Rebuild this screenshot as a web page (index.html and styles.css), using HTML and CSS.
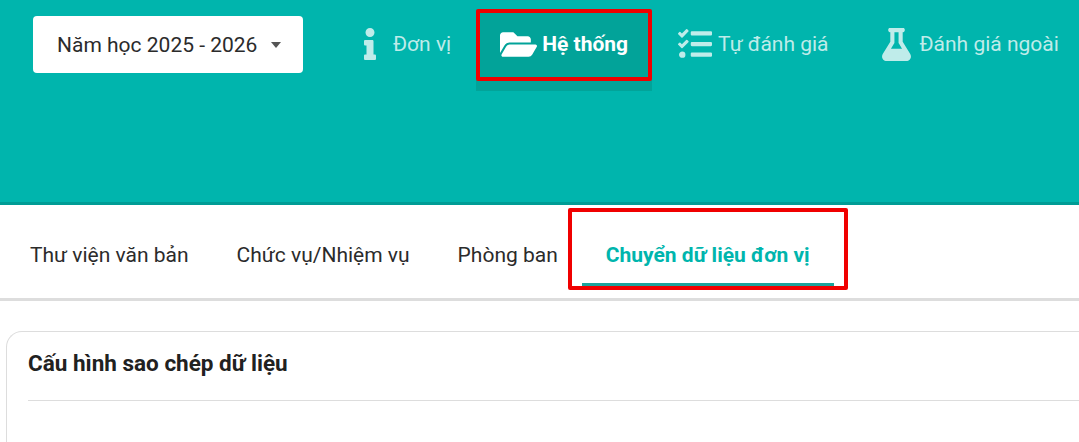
FILE: index.html
```html
<!DOCTYPE html>
<html lang="en">
<head>
  <meta charset="UTF-8">
  <meta name="viewport" content="width=device-width, initial-scale=1.0">
  <title>Chuyển dữ liệu đơn vị</title>
  <link rel="stylesheet" href="styles.css">
</head>
<body>
  <header class="topbar">
    <div class="year-select">
      <span>Năm học 2025 - 2026</span>
      <i class="caret"></i>
    </div>
    <nav class="main-nav">
      <a class="nav-item">
        <svg class="icon" width="12" height="32" viewBox="0 0 192 512"><path d="M20 424.229h20V279.771H20c-11.046 0-20-8.954-20-20V212c0-11.046 8.954-20 20-20h112c11.046 0 20 8.954 20 20v212.229h20c11.046 0 20 8.954 20 20V492c0 11.046-8.954 20-20 20H20c-11.046 0-20-8.954-20-20v-47.771c0-11.046 8.954-20 20-20zM96 0C56.235 0 24 32.235 24 72s32.235 72 72 72 72-32.235 72-72S135.764 0 96 0z"/></svg>
        <span class="nav-label info-label">Đơn vị</span>
      </a>
      <a class="nav-item active">
        <svg class="icon" width="37" height="33" viewBox="0 0 576 512"><path d="M572.694 292.093L500.27 416.248A63.997 63.997 0 0 1 444.989 448H45.025c-18.523 0-30.064-20.093-20.731-36.093l72.424-124.155A64 64 0 0 1 152 256h399.964c18.523 0 30.064 20.093 20.73 36.093zM152 224h328v-48c0-26.51-21.49-48-48-48H272l-64-64H48C21.49 64 0 85.49 0 112v278.046l69.077-118.418C86.214 242.25 117.989 224 152 224z"/></svg>
        <span class="nav-label">Hệ thống</span>
        <span class="mark mark-nav"></span>
      </a>
      <a class="nav-item tasks-item">
        <svg class="icon" width="34" height="34" viewBox="0 0 512 512"><path d="M139.61 35.5a12 12 0 0 0-17 0L58.93 98.81l-22.7-22.12a12 12 0 0 0-17 0L3.53 92.41a12 12 0 0 0 0 17l47.59 47.4a12.78 12.78 0 0 0 17.61 0l15.59-15.62L156.52 69a12.09 12.09 0 0 0 .09-17zm0 159.19a12 12 0 0 0-17 0l-63.68 63.72-22.7-22.1a12 12 0 0 0-17 0L3.53 252a12 12 0 0 0 0 17L51 316.5a12.77 12.77 0 0 0 17.6 0l15.7-15.69 72.2-72.22a12 12 0 0 0 .09-16.9zM64 368c-26.49 0-48.59 21.5-48.59 48S37.53 464 64 464a48 48 0 0 0 0-96zm432 16H208a16 16 0 0 0-16 16v32a16 16 0 0 0 16 16h288a16 16 0 0 0 16-16v-32a16 16 0 0 0-16-16zm0-320H208a16 16 0 0 0-16 16v32a16 16 0 0 0 16 16h288a16 16 0 0 0 16-16V80a16 16 0 0 0-16-16zm0 160H208a16 16 0 0 0-16 16v32a16 16 0 0 0 16 16h288a16 16 0 0 0 16-16v-32a16 16 0 0 0-16-16z"/></svg>
        <span class="nav-label">Tự đánh giá</span>
      </a>
      <a class="nav-item flask-item">
        <svg class="icon" width="29" height="33" viewBox="0 0 448 512"><path d="M437.2 403.5L320 215V64h8c13.3 0 24-10.7 24-24V24c0-13.3-10.7-24-24-24H120c-13.3 0-24 10.7-24 24v16c0 13.3 10.7 24 24 24h8v151L10.8 403.5C-18.5 450.6 15.3 512 70.9 512h306.2c55.7 0 89.4-61.5 60.1-108.5zM137.9 320l48.2-77.6c3.7-5.2 5.8-11.6 5.8-18.4V64h64v160c0 6.9 2.2 13.2 5.8 18.4l48.2 77.6h-172z"/></svg>
        <span class="nav-label">Đánh giá ngoài</span>
      </a>
    </nav>
  </header>

  <div class="tabs">
    <a class="tab">Thư viện văn bản</a>
    <a class="tab">Chức vụ/Nhiệm vụ</a>
    <a class="tab">Phòng ban</a>
    <a class="tab active">Chuyển dữ liệu đơn vị<span class="mark mark-tab"></span></a>
  </div>

  <section class="card">
    <h2 class="card-title">Cấu hình sao chép dữ liệu</h2>
  </section>
</body>
</html>
```
FILE: styles.css
```css
body {
  margin: 0;
  overflow: hidden;
  background: #fff;
  font-family: Roboto, "Noto Sans", sans-serif;
  color: #212121;
}
.topbar {
  display: flex;
  align-items: flex-start;
  box-sizing: border-box;
  height: 205px;
  padding: 10px 0 0 33px;
  background: #00b5ad;
  border-bottom: 3px solid #009c95;
  overflow: hidden;
}
.year-select {
  display: flex;
  align-items: center;
  justify-content: space-between;
  box-sizing: border-box;
  flex: none;
  width: 270px;
  height: 57px;
  margin-top: 6px;
  padding: 0 22px 0 24px;
  background: #fff;
  border-radius: 4px;
  font-size: 21px;
  color: #2b2b2b;
}
.caret {
  width: 0;
  height: 0;
  border-left: 5.5px solid transparent;
  border-right: 5.5px solid transparent;
  border-top: 6px solid #555;
}
.main-nav {
  display: flex;
  margin-left: 37px;
  flex: none;
}
.nav-item {
  position: relative;
  display: flex;
  align-items: center;
  gap: 5px;
  height: 68px;
  padding: 0 24px 13px;
  margin-right: 1px;
  fill: rgba(255, 255, 255, 0.75);
  color: rgba(255, 255, 255, 0.75);
  font-size: 21px;
}
.nav-item.active {
  gap: 5px;
  background: #02a399;
  fill: #fff;
  color: #fff;
  font-weight: 700;
}
.info-label {
  margin-left: 12px;
}
.tasks-item {
  gap: 6px;
  margin-left: 1px;
}
.flask-item {
  gap: 9px;
  margin-left: 4px;
}
.mark {
  position: absolute;
  border: 4px solid #f00000;
  border-radius: 2px;
  box-sizing: border-box;
}
.mark-nav {
  left: 0;
  right: 0;
  top: -1px;
  height: 72px;
}
.tabs {
  display: flex;
  height: 96px;
  box-sizing: border-box;
  padding-left: 6px;
  border-bottom: 3px solid #ddd;
}
.tab {
  position: relative;
  box-sizing: border-box;
  height: 81px;
  padding: 37px 24px 0;
  font-size: 21px;
  line-height: 26px;
  color: #2b2b2b;
}
.tab.active {
  color: #00b5ad;
  font-weight: 700;
  border-bottom: 3px solid #1aa39c;
}
.mark-tab {
  left: -14px;
  right: -14px;
  top: 3px;
  height: 82px;
}
.card {
  box-sizing: border-box;
  height: 111px;
  margin: 30px 0 0 6px;
  padding: 0 0 0 21px;
  border: 1px solid #ddd;
  border-width: 1px 0 0 1px;
  border-top-left-radius: 16px;
}
.card-title {
  margin: 0;
  padding: 16px 0 22px;
  border-bottom: 1px solid #ddd;
  font-size: 22.5px;
  line-height: 30px;
  font-weight: 700;
  color: #212121;
}
```
